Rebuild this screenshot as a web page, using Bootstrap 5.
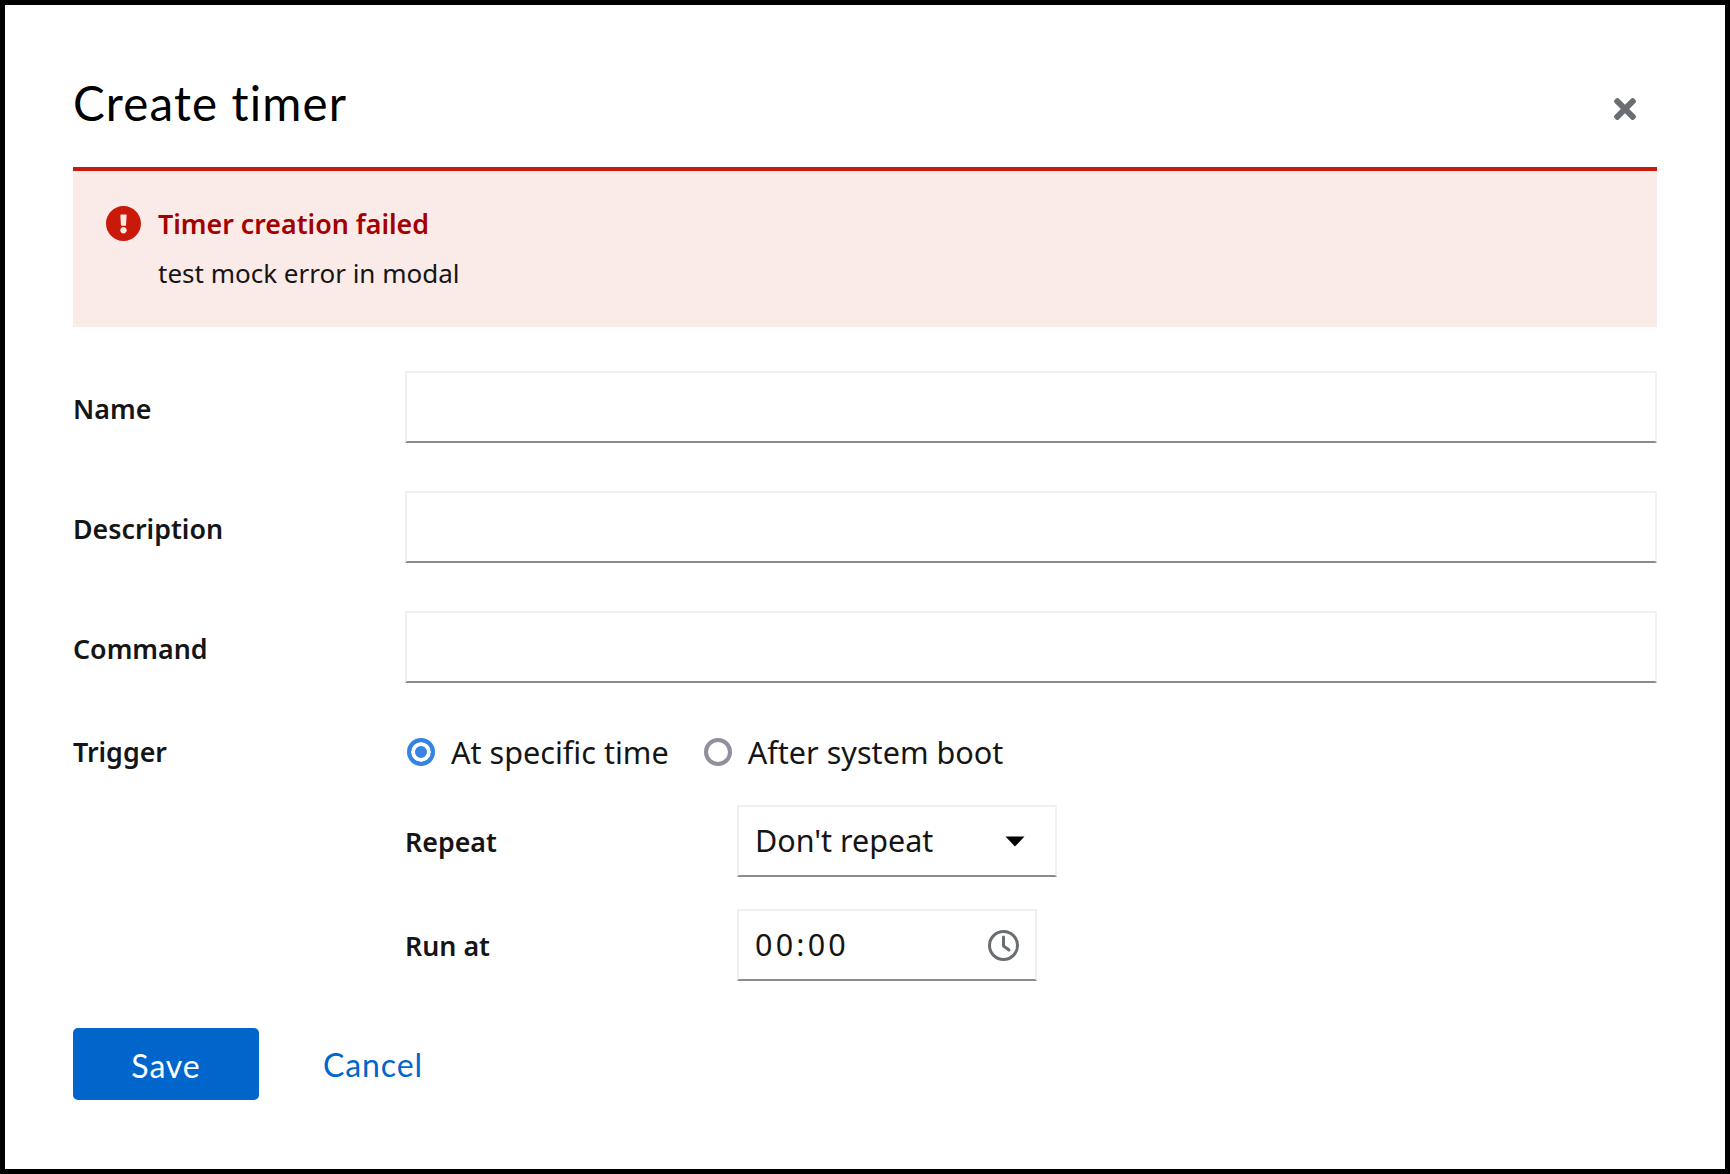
<!DOCTYPE html>
<html lang="en">
<head>
<meta charset="utf-8">
<title>Create timer</title>
<link href="https://cdn.jsdelivr.net/npm/bootstrap@5.3.0/dist/css/bootstrap.min.css" rel="stylesheet">
<style>
html, body { height: 100%; }
body { background: #000; padding: 5px; font-family: "Noto Sans", "Liberation Sans", sans-serif; color: #151515; }
.dlg-shell { background: #fff; height: 1164px; padding: 0 68px; }
.dlg-head { height: 162px; padding-top: 67px; }
.dlg-title { font-family: "Lato", sans-serif; font-size: 47.5px; font-weight: 400; letter-spacing: 1.15px; line-height: 62px; color: #000; margin: 0; }
.dlg-close { background: none; border: 0; padding: 0; width: 22px; height: 22px; margin: 26px 21px 0 0; line-height: 0; }
.dlg-alert { height: 160px; background: #faeae8; border-top: 4px solid #c9190b; padding: 35px 33px 0; }
.dlg-alert svg { width: 35px; height: 35px; fill: #c9190b; flex: none; }
.alert-head { font-size: 26.8px; font-weight: 600; line-height: 35px; color: #a30000; margin-left: 17px; }
.alert-body { font-size: 26px; line-height: 35px; margin: 15px 0 0 52px; }
.dlg-form { padding-top: 44px; }
.dlg-row { height: 72px; margin-bottom: 48px; }
.dlg-label { width: 332px; flex: none; font-size: 26.8px; font-weight: 600; color: #151515; margin: 0; }
.dlg-row > .dlg-label { padding-top: 5px; }
.dlg-input { flex: 1; height: 72px; border: 2px solid #f0f0f0; border-bottom-color: #8a8d90; background: #fff; border-radius: 0; }
.trigger-row { height: 40px; margin-bottom: 33px; margin-top: 49px; }
.radio-item { font-size: 30.6px; line-height: 40px; margin-right: 35px; color: #151515; }
.radio-dot { width: 28px; height: 28px; border-radius: 50%; border: 4px solid #8f8f9d; margin-right: 16px; flex: none; background: #fff; }
.radio-dot.is-on { border-color: #3584e4; background: #3584e4; box-shadow: inset 0 0 0 4px #fff; margin-left: 2px; }
.sub-row { margin-left: 332px; height: 72px; margin-bottom: 32px; }
.sub-label { width: 332px; flex: none; font-size: 26.8px; font-weight: 600; margin: 0; padding-top: 2px; }
.sub-field { height: 72px; border: 2px solid #f0f0f0; border-bottom-color: #8a8d90; font-size: 30.5px; padding: 0 16px; background: #fff; color: #151515; }
.field-repeat { width: 320px; }
.field-time { width: 300px; }
.caret-icon { margin-right: 14px; }
.time-value { letter-spacing: 3.2px; }
.btn-row { margin-top: 47px; }
.btn-save { width: 186px; height: 72px; background: #06c; border: 0; border-radius: 5px; color: #fff; font-size: 32px; letter-spacing: .9px; padding: 3px 0 0; font-family: "Lato", sans-serif; }
.btn-cancel { color: #06c; font-size: 32px; letter-spacing: .9px; padding: 2px 0 0; margin-left: 64px; text-decoration: none; font-family: "Lato", sans-serif; }
</style>
</head>
<body>
<div class="dlg-shell">
  <header class="dlg-head d-flex justify-content-between align-items-start">
    <h1 class="dlg-title">Create timer</h1>
    <button class="dlg-close" type="button" aria-label="Close">
      <svg width="22" height="22" viewBox="1 80 350 352" fill="#6a6e73"><path d="M242.72 256l100.07-100.07c12.28-12.28 12.28-32.19 0-44.48l-22.24-22.24c-12.28-12.28-32.19-12.28-44.48 0L176 189.28 75.93 89.21c-12.28-12.28-32.19-12.28-44.48 0L9.21 111.45c-12.28 12.28-12.28 32.19 0 44.48L109.28 256 9.21 356.07c-12.28 12.28-12.28 32.19 0 44.48l22.24 22.24c12.28 12.28 32.2 12.28 44.48 0L176 322.72l100.07 100.07c12.28 12.28 32.2 12.28 44.48 0l22.24-22.24c12.28-12.28 12.28-32.19 0-44.48L242.72 256z"/></svg>
    </button>
  </header>
  <section class="dlg-alert">
    <div class="d-flex align-items-center">
      <svg viewBox="8 8 496 496"><path d="M504 256c0 136.997-111.043 248-248 248S8 392.997 8 256C8 119.083 119.043 8 256 8s248 111.083 248 248zm-248 50c-25.405 0-46 20.595-46 46s20.595 46 46 46 46-20.595 46-46-20.595-46-46-46zm-43.673-165.346l7.418 136c.347 6.364 5.609 11.346 11.982 11.346h48.546c6.373 0 11.635-4.982 11.982-11.346l7.418-136c.375-6.874-5.098-12.654-11.982-12.654h-63.383c-6.884 0-12.356 5.78-11.981 12.654z"/></svg>
      <div class="alert-head">Timer creation failed</div>
    </div>
    <div class="alert-body">test mock error in modal</div>
  </section>
  <form class="dlg-form">
    <div class="dlg-row d-flex align-items-center"><label class="dlg-label">Name</label><input class="dlg-input" type="text"></div>
    <div class="dlg-row d-flex align-items-center"><label class="dlg-label">Description</label><input class="dlg-input" type="text"></div>
    <div class="dlg-row d-flex align-items-center"><label class="dlg-label">Command</label><input class="dlg-input" type="text"></div>
    <div class="trigger-row d-flex align-items-center">
      <label class="dlg-label">Trigger</label>
      <div class="radio-item d-flex align-items-center"><span class="radio-dot is-on"></span>At specific time</div>
      <div class="radio-item d-flex align-items-center"><span class="radio-dot"></span>After system boot</div>
    </div>
    <div class="sub-row d-flex align-items-center">
      <label class="sub-label">Repeat</label>
      <div class="sub-field field-repeat d-flex align-items-center justify-content-between">
        <span>Don't repeat</span>
        <svg width="20" height="11" viewBox="0 0 20 11" class="caret-icon"><path d="M0.5 0.5h19L10 10.500z" fill="#000"/></svg>
      </div>
    </div>
    <div class="sub-row d-flex align-items-center">
      <label class="sub-label">Run at</label>
      <div class="sub-field field-time d-flex align-items-center justify-content-between">
        <span class="time-value">00:00</span>
        <svg width="31" height="31" viewBox="0 0 31 31" fill="none" stroke="#6a6e73" stroke-width="3"><circle cx="15.5" cy="15.5" r="14"/><path d="M15.5 7v9l5.500 4" stroke-linecap="round" stroke-linejoin="round"/></svg>
      </div>
    </div>
    <div class="btn-row d-flex align-items-center">
      <button class="btn btn-save" type="button">Save</button>
      <a class="btn-cancel" href="#">Cancel</a>
    </div>
  </form>
</div>
<script src="https://cdn.jsdelivr.net/npm/bootstrap@5.3.0/dist/js/bootstrap.bundle.min.js"></script>
</body>
</html>
